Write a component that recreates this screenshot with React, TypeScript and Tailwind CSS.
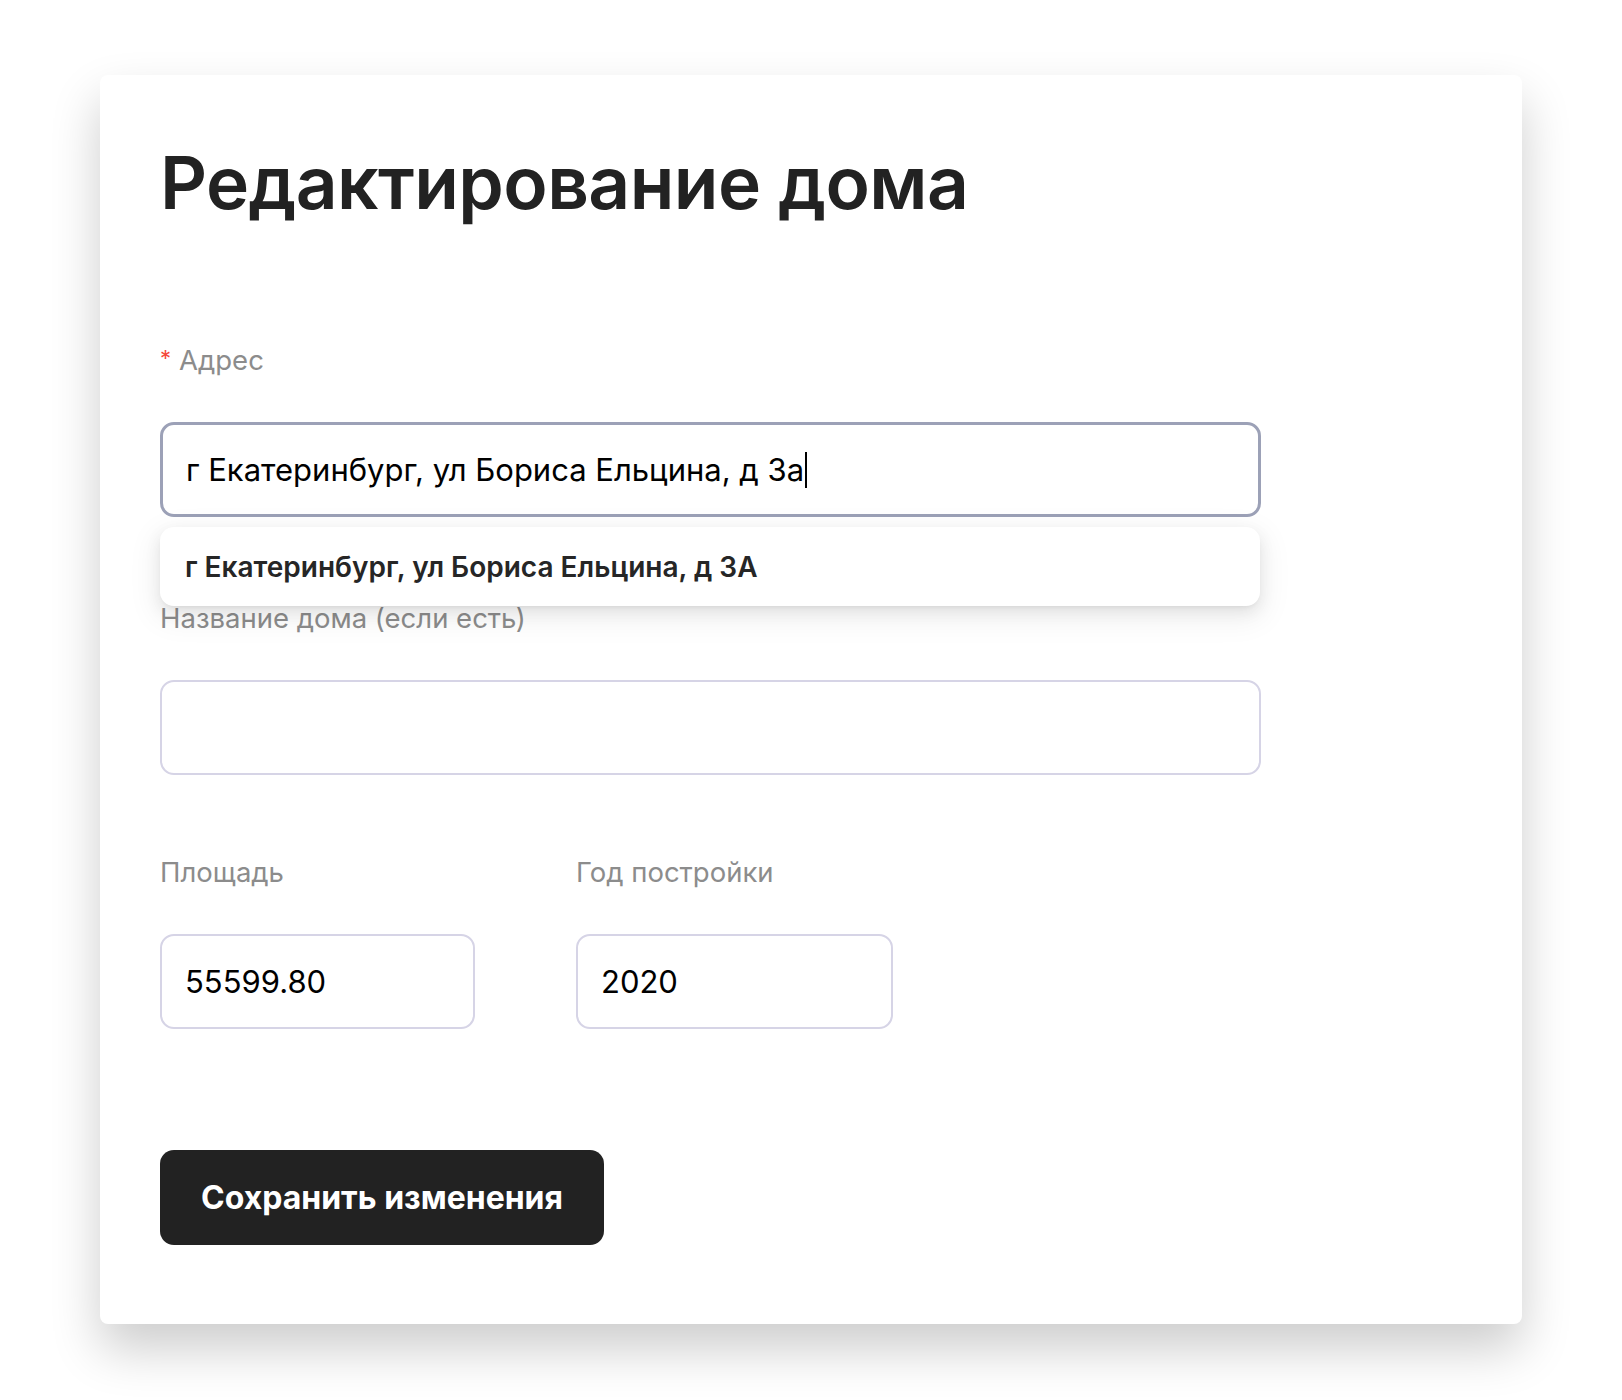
import React from "react";

const font = { fontFamily: "Inter, 'Noto Sans', sans-serif" };

function Label({ children, required }: { children: React.ReactNode; required?: boolean }) {
  return (
    <div className="flex items-center h-[26px] text-[27.5px] leading-[26px] text-[#8c8c8c]">
      {required && <span className="text-[#f5483b] text-[22px] mr-[8px] relative top-[-2px]">*</span>}
      <span>{children}</span>
    </div>
  );
}

function Field({ value, className = "", focused, caret }: { value?: string; className?: string; focused?: boolean; caret?: boolean }) {
  return (
    <div
      className={
        "h-[95px] rounded-[14px] bg-white flex items-center pl-[23px] text-[31px] leading-[31px] text-black " +
        (focused ? "border-[3px] border-[#9ca1b7] pl-[22px] " : "border-2 border-[#d6d4e6] ") +
        className
      }
    >
      <span>{value}</span>
      {caret && <span className="inline-block w-[1.5px] h-[36px] bg-black ml-[1px]" />}
    </div>
  );
}

export default function App() {
  return (
    <div className="min-h-[1400px] bg-white pt-[75px] pl-[100px]" style={font}>
      <div className="w-[1422px] h-[1249px] bg-white rounded-[8px] shadow-[0_25px_50px_rgba(0,0,0,0.2)] pl-[60px] pt-[71px]">
        <h1 className="text-[73px] leading-[74px] font-semibold text-[#222222] tracking-[-0.6px]">Редактирование дома</h1>

        <div className="mt-[127px]">
          <Label required>Адрес</Label>
          <div className="relative mt-[49px] w-[1101px]">
            <Field value="г Екатеринбург, ул Бориса Ельцина, д 3а" focused caret />
            <div className="absolute left-0 top-[105px] w-[1100px] h-[79px] bg-white rounded-[14px] shadow-[0_6px_16px_rgba(0,0,0,0.08),0_3px_6px_-4px_rgba(0,0,0,0.12),0_9px_28px_8px_rgba(0,0,0,0.05)] flex items-center pl-[25px] text-[28px] leading-[28px] font-semibold text-[#262626] z-10">
              г Екатеринбург, ул Бориса Ельцина, д 3А
            </div>
          </div>
        </div>

        <div className="mt-[88px]">
          <Label>Название дома (если есть)</Label>
          <div className="mt-[49px] w-[1101px]">
            <Field />
          </div>
        </div>

        <div className="mt-[84px] grid grid-cols-[315px_317px] gap-x-[101px]">
          <div>
            <Label>Площадь</Label>
            <div className="mt-[49px]">
              <Field value="55599.80" />
            </div>
          </div>
          <div>
            <Label>Год постройки</Label>
            <div className="mt-[49px]">
              <Field value="2020" />
            </div>
          </div>
        </div>

        <button className="mt-[121px] w-[444px] h-[95px] rounded-[14px] bg-[#222222] text-white text-[32px] font-bold flex items-center justify-center">
          Сохранить изменения
        </button>
      </div>
    </div>
  );
}
